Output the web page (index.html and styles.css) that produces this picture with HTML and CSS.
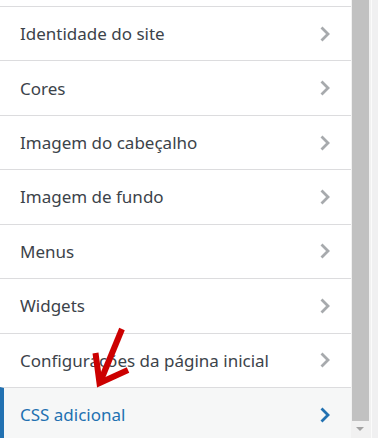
FILE: index.html
```html
<!DOCTYPE html>
<html lang="pt">
<head>
<meta charset="utf-8">
<link rel="stylesheet" href="styles.css">
</head>
<body>
<div class="frame">
  <div class="panel">
    <div class="stub"></div>
    <ul class="sections">
      <li class="section"><span class="title">Identidade do site</span><svg class="chev" viewBox="0 0 10 16"><polyline points="1.5,1.5 8,8 1.5,14.5"/></svg></li>
      <li class="section"><span class="title">Cores</span><svg class="chev" viewBox="0 0 10 16"><polyline points="1.5,1.5 8,8 1.5,14.5"/></svg></li>
      <li class="section"><span class="title">Imagem do cabeçalho</span><svg class="chev" viewBox="0 0 10 16"><polyline points="1.5,1.5 8,8 1.5,14.5"/></svg></li>
      <li class="section"><span class="title">Imagem de fundo</span><svg class="chev" viewBox="0 0 10 16"><polyline points="1.5,1.5 8,8 1.5,14.5"/></svg></li>
      <li class="section"><span class="title">Menus</span><svg class="chev" viewBox="0 0 10 16"><polyline points="1.5,1.5 8,8 1.5,14.5"/></svg></li>
      <li class="section"><span class="title">Widgets</span><svg class="chev" viewBox="0 0 10 16"><polyline points="1.5,1.5 8,8 1.5,14.5"/></svg></li>
      <li class="section"><span class="title">Configurações da página inicial</span><svg class="chev" viewBox="0 0 10 16"><polyline points="1.5,1.5 8,8 1.5,14.5"/></svg></li>
      <li class="section active"><span class="title">CSS adicional</span><svg class="chev" viewBox="0 0 10 16"><polyline points="1.5,1.5 8,8 1.5,14.5"/></svg></li>
    </ul>
  </div>
  <div class="scrollbar">
    <div class="thumb"></div>
    <div class="down"></div>
  </div>
  <div class="sep"></div>
  <div class="side"></div>
</div>
<svg class="pointer" width="378" height="438" viewBox="0 0 378 438">
  <line x1="122" y1="329" x2="101" y2="380"/>
  <polyline points="95.5,353 99.5,383 128,370"/>
</svg>
</body>
</html>
```

FILE: styles.css
```css
html, body {
  margin: 0;
  padding: 0;
  background: #fff;
}
.frame {
  display: flex;
  width: 378px;
  height: 438px;
  overflow: hidden;
}
.panel {
  width: 351px;
  flex: none;
  background: #fff;
  overflow: hidden;
}
.stub {
  height: 6px;
}
.sections {
  list-style: none;
  margin: 0;
  padding: 0;
}
.section {
  display: flex;
  align-items: center;
  justify-content: space-between;
  height: 53.43px;
  border-top: 1px solid #dcdcde;
  padding: 0 21px 0 20px;
  font-family: "Noto Sans", "Open Sans", sans-serif;
  font-size: 17px;
  color: #3c434a;
}
.section.active {
  background: #f6f7f7;
  color: #2271b1;
  border-left: 4px solid #2271b1;
  padding-left: 16px;
}
.chev {
  width: 10px;
  height: 16px;
  flex: none;
}
.chev polyline {
  fill: none;
  stroke: #a7aaad;
  stroke-width: 2.8;
}
.section.active .chev polyline {
  stroke: #2271b1;
}
.scrollbar {
  width: 20px;
  flex: none;
  background: #f1f1f1;
  position: relative;
}
.thumb {
  margin-left: 1px;
  width: 17px;
  height: 421px;
  background: #c1c1c1;
}
.down {
  position: absolute;
  left: 5px;
  top: 427px;
  width: 0;
  height: 0;
  border-left: 4.5px solid transparent;
  border-right: 4.5px solid transparent;
  border-top: 4.5px solid #a3a3a3;
}
.sep {
  width: 1px;
  flex: none;
  background: #fbfbfb;
}
.side {
  flex: 1;
  background: #f0f0f1;
}
.pointer {
  position: absolute;
  left: 0;
  top: 0;
  pointer-events: none;
}
.pointer line,
.pointer polyline {
  fill: none;
  stroke: #cc0000;
  stroke-width: 6;
  stroke-linejoin: miter;
}
```
